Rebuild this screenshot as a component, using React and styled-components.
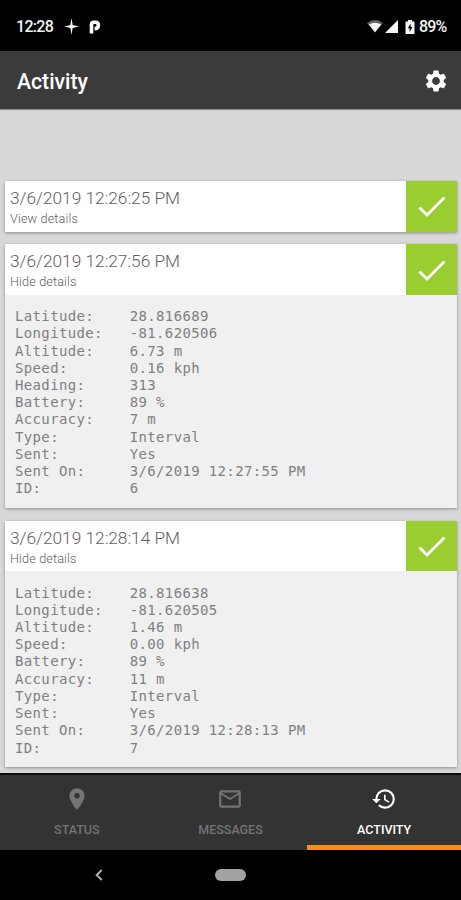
import React from 'react';
import styled, { createGlobalStyle } from 'styled-components';
import { MdSettings, MdLocationOn, MdMailOutline, MdHistory } from 'react-icons/md';

const COLORS = {
  bar: '#3b3b3b',
  tabs: '#333333',
  page: '#d8d8d8',
  panel: '#f0f0f0',
  green: '#9acd2f',
  orange: '#f78c1b',
  text: '#606060',
  muted: '#747474',
};

const ENTRIES = [
  { date: '3/6/2019 12:26:25 PM' },
  {
    date: '3/6/2019 12:27:56 PM',
    details: [
      ['Latitude:', '28.816689'],
      ['Longitude:', '-81.620506'],
      ['Altitude:', '6.73 m'],
      ['Speed:', '0.16 kph'],
      ['Heading:', '313'],
      ['Battery:', '89 %'],
      ['Accuracy:', '7 m'],
      ['Type:', 'Interval'],
      ['Sent:', 'Yes'],
      ['Sent On:', '3/6/2019 12:27:55 PM'],
      ['ID:', '6'],
    ],
  },
  {
    date: '3/6/2019 12:28:14 PM',
    details: [
      ['Latitude:', '28.816638'],
      ['Longitude:', '-81.620505'],
      ['Altitude:', '1.46 m'],
      ['Speed:', '0.00 kph'],
      ['Battery:', '89 %'],
      ['Accuracy:', '11 m'],
      ['Type:', 'Interval'],
      ['Sent:', 'Yes'],
      ['Sent On:', '3/6/2019 12:28:13 PM'],
      ['ID:', '7'],
    ],
  },
];

const StatusBar = () => (
  <StatusWrapper>
    <Clock>12:28</Clock>
    <Sparkle viewBox="0 0 14 16">
      <path d="M7 0 L8.1 6.6 L14 8 L8.1 9.4 L7 16 L5.9 9.4 L0 8 L5.9 6.6Z" />
    </Sparkle>
    <ParkIcon viewBox="0 0 12 14">
      <path d="M2.5 13.5V4.5Q2.5 2.2 5 2.2H6.2Q9.4 2.2 9.4 5.3T6.2 8.6H5.6" />
    </ParkIcon>
    <Spacer />
    <WifiIcon viewBox="0 0 16 13">
      <path d="M0 3.2Q8 -3 16 3.2L13.2 6.2H2.8Z" opacity="0.4" />
      <path d="M1.8 4.6Q8 1 14.2 4.6L8 12.6Z" />
    </WifiIcon>
    <SignalIcon viewBox="0 0 13 13">
      <path d="M13 0V13H0Z" />
    </SignalIcon>
    <BatteryIcon viewBox="0 0 10 14">
      <path d="M3 0H7V1.5H9.5V14H.5V1.5H3Z" />
      <path d="M5.6 3.5L2.8 8.2H4.6V12L7.3 7.1H5.6Z" fill="#000" />
    </BatteryIcon>
    <Percent>89%</Percent>
  </StatusWrapper>
);

const Entry = ({ date, details }) => (
  <Card>
    <CardHead>
      <CardText>
        <DateLine>{date}</DateLine>
        <Toggle>{details ? 'Hide details' : 'View details'}</Toggle>
      </CardText>
      <CheckBox>
        <CheckIcon viewBox="0 0 28 22">
          <path d="M1.5 11.5L9 19L26.5 1.5" />
        </CheckIcon>
      </CheckBox>
    </CardHead>
    {details && (
      <Details>
        {details.map(([label, value]) => (
          <React.Fragment key={label}>
            <dt>{label}</dt>
            <dd>{value}</dd>
          </React.Fragment>
        ))}
      </Details>
    )}
  </Card>
);

const App = () => (
  <Screen>
    <GlobalStyle />
    <StatusBar />
    <Header>
      <Title>Activity</Title>
      <MdSettings size={26} />
    </Header>
    <List>
      {ENTRIES.map((entry) => (
        <Entry key={entry.date} {...entry} />
      ))}
    </List>
    <TabBar>
      <Tab>
        <MdLocationOn size={26} />
        <TabLabel>STATUS</TabLabel>
      </Tab>
      <Tab>
        <MdMailOutline size={26} />
        <TabLabel>MESSAGES</TabLabel>
      </Tab>
      <Tab $active>
        <MdHistory size={26} />
        <TabLabel>ACTIVITY</TabLabel>
      </Tab>
    </TabBar>
    <SystemNav>
      <BackIcon viewBox="0 0 8 12">
        <path d="M6.8 1L1.6 6L6.8 11" />
      </BackIcon>
      <HomePill />
      <span />
    </SystemNav>
  </Screen>
);

const GlobalStyle = createGlobalStyle`
  * {
    box-sizing: border-box;
  }

  body {
    margin: 0;
    font-family: Roboto, sans-serif;
    background: #000;
  }

  svg {
    display: block;
    flex: none;
  }
`;

const Screen = styled.div`
  display: flex;
  flex-direction: column;
  width: 461px;
  height: 900px;
  overflow: hidden;
  background: ${COLORS.page};
`;

const StatusWrapper = styled.div`
  display: flex;
  align-items: center;
  flex: none;
  height: 51px;
  padding: 2px 14px 0 16px;
  background: #000;
  color: #f4f4f4;
  fill: #f4f4f4;
  font-size: 16px;
  font-weight: 500;
`;

const Clock = styled.span`
  width: 48px;
  letter-spacing: -0.7px;
`;

const Percent = styled.span`
  width: 28px;
  letter-spacing: -0.8px;
`;

const Spacer = styled.div`
  flex: 1;
`;

const Sparkle = styled.svg`
  width: 15px;
  height: 17px;
`;

const ParkIcon = styled.svg`
  width: 12px;
  height: 14px;
  margin-left: 10px;
  fill: none;
  stroke: #fff;
  stroke-width: 3.6;
`;

const WifiIcon = styled.svg`
  width: 16px;
  height: 13px;
  margin-right: 2px;
`;

const SignalIcon = styled.svg`
  width: 13px;
  height: 13px;
  margin-right: 7px;
`;

const BatteryIcon = styled.svg`
  width: 10px;
  height: 14px;
  margin-right: 4px;
`;

const Header = styled.header`
  display: flex;
  align-items: center;
  justify-content: space-between;
  flex: none;
  height: 58px;
  padding: 2px 12px 0 17px;
  background: ${COLORS.bar};
  color: #fff;
  box-shadow: 0 1px 1px rgba(0, 0, 0, 0.35);
`;

const Title = styled.h1`
  margin: 0;
  font-size: 21.2px;
  font-weight: 500;
`;

const List = styled.main`
  display: flex;
  flex-direction: column;
  gap: 12.5px;
  flex: 1;
  min-height: 0;
  padding: 72px 4px 0 5px;
`;

const Card = styled.article`
  flex: none;
  background: ${COLORS.panel};
  box-shadow: 0 1px 3px rgba(0, 0, 0, 0.35);
`;

const CardHead = styled.div`
  display: flex;
  height: 50.7px;
  background: #fff;
`;

const CardText = styled.div`
  flex: 1;
  padding: 7px 0 0 5px;
  color: ${COLORS.text};
`;

const DateLine = styled.div`
  font-size: 17.3px;
  font-weight: 300;
  line-height: 21px;
`;

const Toggle = styled.div`
  font-size: 12.7px;
  font-weight: 300;
  line-height: 19px;
  letter-spacing: 0.12px;
`;

const CheckBox = styled.div`
  display: grid;
  place-items: center;
  width: 51px;
  padding-top: 2px;
  background: ${COLORS.green};
`;

const CheckIcon = styled.svg`
  width: 28px;
  height: 22px;
  fill: none;
  stroke: #fff;
  stroke-width: 2.8;
`;

const Details = styled.dl`
  display: grid;
  grid-template-columns: 114.7px 1fr;
  margin: 0;
  padding: 13.2px 10px 10.5px;
  color: #808080;
  font-family: 'DejaVu Sans Mono', monospace;
  font-size: 14px;
  line-height: 17.24px;
  letter-spacing: 0.36px;

  dd {
    margin: 0;
  }
`;

const TabBar = styled.nav`
  display: grid;
  grid-template-columns: repeat(3, 1fr);
  flex: none;
  height: 77px;
  border-top: 2px solid #0c0c0c;
  background: ${COLORS.tabs};
`;

const Tab = styled.div`
  display: flex;
  flex-direction: column;
  align-items: center;
  padding-top: 11px;
  color: ${({ $active }) => ($active ? '#fff' : COLORS.muted)};
  border-bottom: 5px solid ${({ $active }) => ($active ? COLORS.orange : 'transparent')};
`;

const TabLabel = styled.span`
  margin-top: 10px;
  font-size: 12.5px;
  font-weight: 500;
  line-height: 15px;
`;

const SystemNav = styled.div`
  display: grid;
  grid-template-columns: 1fr 31px 1fr;
  align-items: center;
  flex: none;
  height: 50px;
  background: #000;
`;

const BackIcon = styled.svg`
  width: 8px;
  height: 12px;
  margin-left: 95px;
  fill: none;
  stroke: #b5b5b5;
  stroke-width: 1.8;
`;

const HomePill = styled.div`
  height: 12px;
  border-radius: 6px;
  background: #a2a2a2;
`;

export default App;
